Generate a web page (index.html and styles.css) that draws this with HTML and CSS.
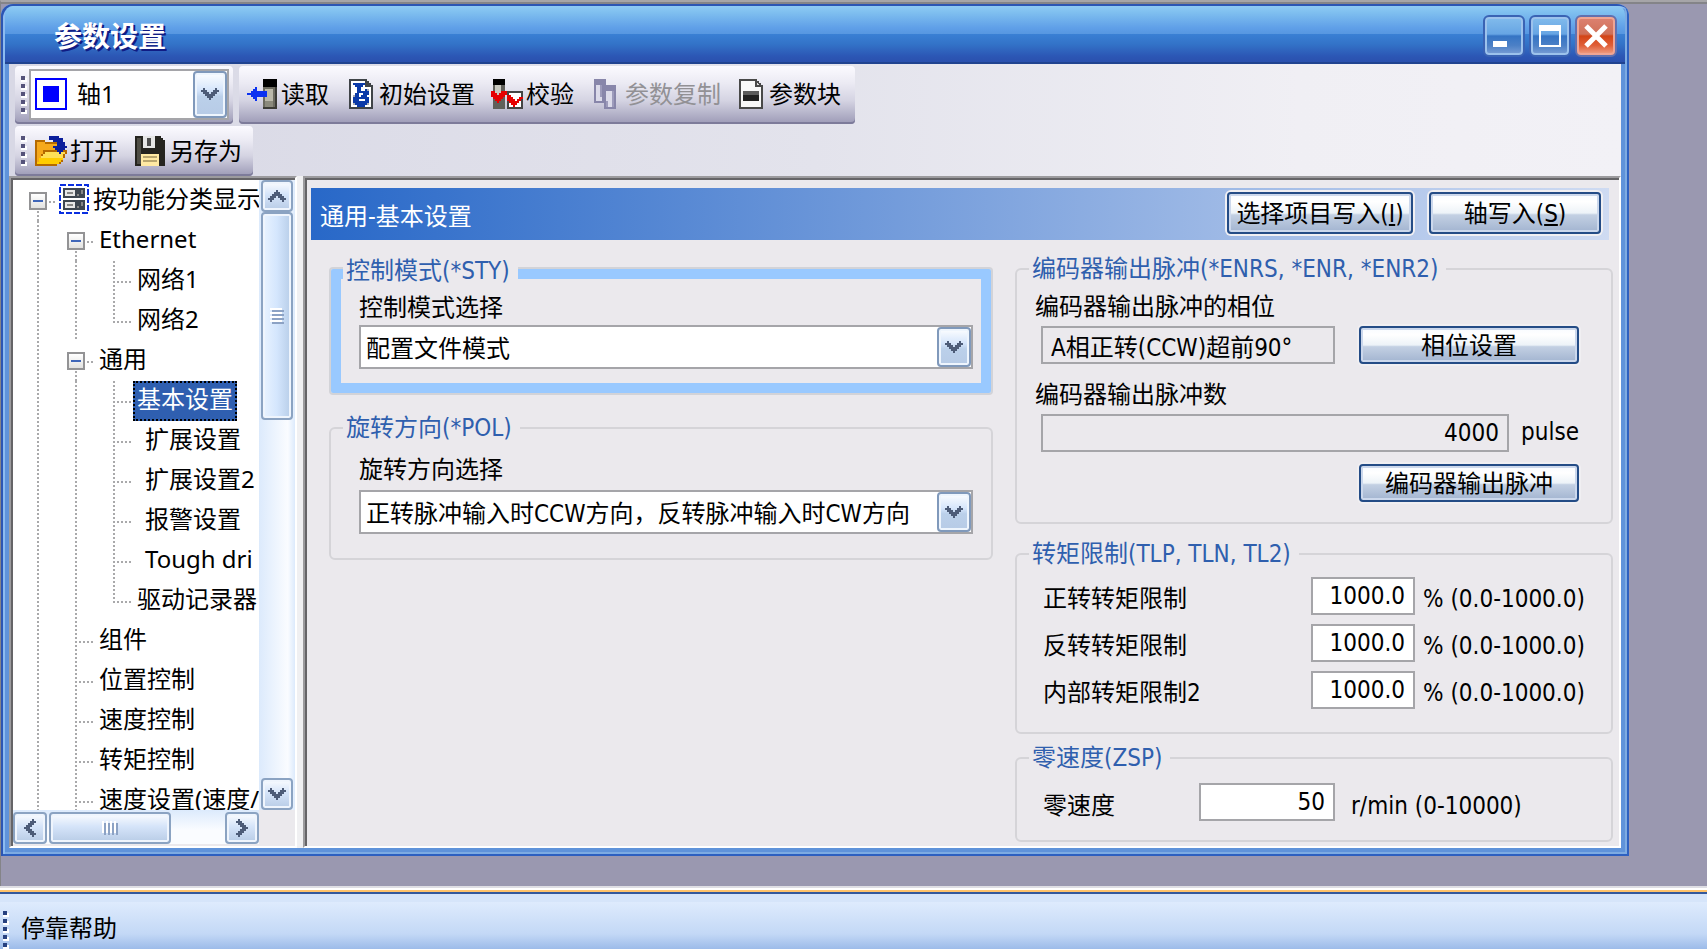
FILE: index.html
```html
<!DOCTYPE html>
<html lang="zh-CN">
<head>
<meta charset="utf-8">
<title>参数设置</title>
<link rel="stylesheet" href="styles.css">
</head>
<body>
<main class="workspace">
  <section class="window" aria-label="参数设置">
    <header class="titlebar">
      <h1 class="title">参数设置</h1>
      <div class="caption-buttons">
        <button class="caption" aria-label="最小化"><svg width="38" height="38" shape-rendering="crispEdges"><path fill="#fff" d="M8 24h14v6H8z"/></svg></button>
        <button class="caption" aria-label="最大化"><svg width="38" height="38" shape-rendering="crispEdges"><path fill="#fff" fill-rule="evenodd" d="M8 8h22v22H8zM10 14v14h18V14z"/></svg></button>
        <button class="caption close" aria-label="关闭"><svg width="38" height="38"><path stroke="#fff" stroke-width="5" d="M9 9L29 29M29 9L9 29"/></svg></button>
      </div>
    </header>
    <div class="client">
      <div class="toolbars">
        <div class="strip axis-strip">
          <span class="grip"></span>
          <div class="combo axis-combo">
            <svg class="axis-icon" width="32" height="32" shape-rendering="crispEdges"><rect x="1" y="1" width="30" height="30" fill="#fff" stroke="#00f" stroke-width="2"/><path fill="#00f" d="M8 8h16v16H8z"/></svg>
            <select aria-label="轴"><option>轴1</option></select>
            <span class="drop"><svg width="18" height="12" shape-rendering="crispEdges"><path fill="#4d5c78" d="M2 0h2v2h2v2h2v2h2V4h2V2h2V0h2v2h2v2h-2v2h-2v2h-2v2h-2v2H8v-2H6V8H4V6H2V4H0V2h2z"/></svg></span>
          </div>
        </div>
        <div class="strip action-strip">
          <button class="tool read"><svg width="30" height="30" shape-rendering="crispEdges"><path fill="#6c6b60" d="M16 8h14v22H16z"/><path fill="#000" d="M16 0h14v8H16z"/><path fill="#bbb9aa" d="M18 10h8v12h-8z"/><path fill="#8b8a7c" d="M18 22h8v6h-8z"/><path fill="#3c3c36" d="M28 8h2v22H16v-2h12z"/><path fill="#0b32f0" d="M8 8h2v4h10v6H10v4H8v-2H6v-2H4v-2H0v-2h4v-2h2v-2h2z"/></svg><span>读取</span></button>
          <button class="tool"><svg width="24" height="30" shape-rendering="crispEdges"><path fill="#404448" d="M0 0h18v2h2v2h2v2h2v24H0z"/><path fill="#fff" d="M2 2h14v6h6v20H2z"/><path fill="#a9adb5" d="M4 16h2v2H4zM4 20h2v2H4zM4 24h4v2H4zM16 10h4v2h-4zM16 26h4v-2h-4z"/><path fill="#0b3aa8" d="M4 4h12v2h-2v2h-2v4h4v-2h2v2h2v4h-2v2h2v6h-2v2h-2v2H8v-2H6v-2H4v-6h2v-4h2V8H6V6H4z"/><path fill="#fff" d="M10 14h4v2h-4zM10 16h2v2h-2zM10 20h6v2h-6z"/></svg><span>初始设置</span></button>
          <button class="tool verify"><svg width="32" height="30" shape-rendering="crispEdges"><path fill="#60605a" d="M2 6h12v24H2z"/><path fill="#000" d="M2 0h12v6H2z"/><path fill="#c9c9c0" d="M4 6h6v12H4z"/><path fill="#444" d="M16 12h16v18H16z"/><path fill="#fff" d="M18 14h12v14H18z"/><path fill="#e60000" d="M0 12h4v2h2v2h2v-2h2v-2h6v4h-2v2h-2v2h-2v2H8v2H6v-2H4v-2H2v-2H0zM16 16h4v2h2v2h2v2h2v-2h2v-2h4v2h-2v2h-2v2h-2v2h-2v2h-2v-2h-2v-2h-2v-2h-2z"/></svg><span>校验</span></button>
          <button class="tool copy" disabled><svg width="22" height="30" shape-rendering="crispEdges"><path fill="#8886aa" d="M0 0h12v24H0zM10 6h12v24H10z"/><path fill="#dcdbea" d="M2 6h6v16H2zM12 12h8v16h-8z"/><path fill="#9d9bbb" d="M6 6h2v12H6zM18 12h2v16h-2zM12 22h2v6h-2z"/></svg><span>参数复制</span></button>
          <button class="tool"><svg width="24" height="30" shape-rendering="crispEdges"><path fill="#494949" d="M0 0h18v2h2v2h2v2h2v24H0z"/><path fill="#f8f8f8" d="M2 2h14v6h6v20H2z"/><path fill="#ddd" d="M18 4v2h2z"/><path fill="#5d5d5d" d="M4 12h16v4H4z"/><path fill="#222" d="M4 16h16v6H4z"/></svg><span>参数块</span></button>
        </div>
        <div class="strip file-strip">
          <span class="grip"></span>
          <button class="tool"><svg width="32" height="30" shape-rendering="crispEdges"><path fill="#b56a00" d="M0 4h10v2h16v8h6v4h-2v4h-2v4h-2v2h-4v2H0z"/><path fill="#f6a91c" d="M2 6h8v2h14v6H8v4H6v4H4v4H2z"/><path fill="#ffe056" d="M10 16h20v2h-2v4H6v-2h2v-2h2z"/><path fill="#fc0" d="M6 22h22v2h-2v2h-2v2H2v-2h2v-4z"/><path fill="#0a1e9b" d="M14 0h10v2h4v4h2v4h2v2h-2v2h-2v2h-2v2h-2v-2h-2v-2h-2v-2h-2v-2h4V6h-4V4h-4z"/></svg><span>打开</span></button>
          <button class="tool save"><svg width="30" height="30" shape-rendering="crispEdges"><path fill="#25241f" d="M0 0h26v2h2v2h2v26H0z"/><path fill="#4e4d45" d="M2 2h4v26H2z"/><path fill="#e6e6e6" d="M8 0h12v12H8z"/><path fill="#4d4d4d" d="M12 2h4v8h-4z"/><path fill="#ffe9a3" d="M6 18h18v12H6z"/><path fill="#b9a66e" d="M8 20h14v2H8zM8 24h14v2H8z"/></svg><span>另存为</span></button>
        </div>
      </div>

      <div class="body">
        <nav class="tree-pane" aria-label="参数树">
          <div class="tree">
            <div class="row"><button class="exp" aria-label="折叠"></button><svg class="root-icon" width="30" height="30" shape-rendering="crispEdges"><rect x="1" y="1" width="28" height="28" fill="#fff" stroke="#0a2fe0" stroke-width="2" stroke-dasharray="6 2"/><path fill="#3e4650" d="M4 4h22v10H4zM4 16h22v10H4z"/><path fill="#e8e8e8" d="M6 6h10v6H6zM6 18h10v6H6z"/><path fill="#888" d="M8 8h6v2H8zM8 20h6v2H8zM18 10h2v2h-2zM22 6h2v4h-2zM18 22h2v2h-2zM22 18h2v4h-2z"/></svg><span class="label">按功能分类显示</span></div>
            <div class="row"><i class="v"></i><button class="exp" aria-label="折叠"></button><span class="label">Ethernet</span></div>
            <div class="row"><i class="v"></i><i class="v"></i><i class="v t"></i><span class="label">网络1</span></div>
            <div class="row"><i class="v"></i><i class="v"></i><i class="v t end"></i><span class="label">网络2</span></div>
            <div class="row"><i class="v"></i><button class="exp" aria-label="折叠"></button><span class="label">通用</span></div>
            <div class="row"><i class="v"></i><i class="v"></i><i class="v t"></i><span class="label selected">基本设置</span></div>
            <div class="row"><i class="v"></i><i class="v"></i><i class="v t"></i><span class="label inset">扩展设置</span></div>
            <div class="row"><i class="v"></i><i class="v"></i><i class="v t"></i><span class="label inset">扩展设置2</span></div>
            <div class="row"><i class="v"></i><i class="v"></i><i class="v t"></i><span class="label inset">报警设置</span></div>
            <div class="row"><i class="v"></i><i class="v"></i><i class="v t"></i><span class="label inset">Tough dri</span></div>
            <div class="row"><i class="v"></i><i class="v"></i><i class="v t end"></i><span class="label">驱动记录器</span></div>
            <div class="row"><i class="v"></i><i class="v t"></i><span class="label">组件</span></div>
            <div class="row"><i class="v"></i><i class="v t"></i><span class="label">位置控制</span></div>
            <div class="row"><i class="v"></i><i class="v t"></i><span class="label">速度控制</span></div>
            <div class="row"><i class="v"></i><i class="v t"></i><span class="label">转矩控制</span></div>
            <div class="row"><i class="v"></i><i class="v t"></i><span class="label">速度设置(速度/</span></div>
          </div>
          <div class="vbar">
            <button class="sb" aria-label="向上"><svg width="18" height="12" shape-rendering="crispEdges"><path fill="#4d5c78" d="M8 0h2v2h2v2h2v2h2v2h2v2h-2v2h-2v-2h-2V8h-2V6H8v2H6v2H4v2H2v-2H0V8h2V6h2V4h2V2h2z"/></svg></button>
            <div class="thumb"><svg width="14" height="16" shape-rendering="crispEdges"><path fill="#fff" d="M0 0h12v2H0zM0 4h12v2H0zM0 8h12v2H0zM0 12h12v2H0z"/><path fill="#8ca2c4" d="M2 2h12v2H2zM2 6h12v2H2zM2 10h12v2H2zM2 14h12v2H2z"/></svg></div>
            <button class="sb last" aria-label="向下"><svg width="18" height="12" shape-rendering="crispEdges"><path fill="#4d5c78" d="M2 0h2v2h2v2h2v2h2V4h2V2h2V0h2v2h2v2h-2v2h-2v2h-2v2h-2v2H8v-2H6V8H4V6H2V4H0V2h2z"/></svg></button>
          </div>
          <div class="hbar">
            <button class="sb" aria-label="向左"><svg width="12" height="18" shape-rendering="crispEdges"><path fill="#4d5c78" d="M8 0h2v2h2v2h-2v2H8v2H6v2h2v2h2v2h2v2h-2v2H8v-2H6v-2H4v-2H2v-2H0V8h2V6h2V4h2V2h2z"/></svg></button>
            <div class="thumb"><svg width="16" height="14" shape-rendering="crispEdges"><path fill="#fff" d="M0 0h2v12H0zM4 0h2v12H4zM8 0h2v12H8zM12 0h2v12h-2z"/><path fill="#8ca2c4" d="M2 2h2v12H2zM6 2h2v12H6zM10 2h2v12h-2zM14 2h2v12h-2z"/></svg></div>
            <button class="sb last" aria-label="向右"><svg width="12" height="18" shape-rendering="crispEdges"><path fill="#4d5c78" d="M4 0H2v2H0v2h2v2h2v2h2v2H4v2H2v2H0v2h2v2h2v-2h2v-2h2v-2h2v-2h2V8h-2V6H8V4H6V2H4z"/></svg></button>
          </div>
          <div class="corner"></div>
        </nav>

        <div class="panel">
          <div class="panel-head">
            <h2 class="panel-title">通用-基本设置</h2>
            <button class="btn head-btn wide">选择项目写入(<u>I</u>)</button>
            <button class="btn head-btn">轴写入(<u>S</u>)</button>
          </div>
          <form class="groups">
            <div class="col">
              <fieldset class="active">
                <legend>控制模式(*STY)</legend>
                <label class="lab" for="mode">控制模式选择</label>
                <div class="combo">
                  <select id="mode"><option>配置文件模式</option></select>
                  <span class="drop"><svg width="18" height="12" shape-rendering="crispEdges"><path fill="#4d5c78" d="M2 0h2v2h2v2h2v2h2V4h2V2h2V0h2v2h2v2h-2v2h-2v2h-2v2h-2v2H8v-2H6V8H4V6H2V4H0V2h2z"/></svg></span>
                </div>
              </fieldset>
              <fieldset class="rotation">
                <legend>旋转方向(*POL)</legend>
                <label class="lab" for="pol">旋转方向选择</label>
                <div class="combo">
                  <select id="pol"><option>正转脉冲输入时CCW方向，反转脉冲输入时CW方向</option></select>
                  <span class="drop"><svg width="18" height="12" shape-rendering="crispEdges"><path fill="#4d5c78" d="M2 0h2v2h2v2h2v2h2V4h2V2h2V0h2v2h2v2h-2v2h-2v2h-2v2h-2v2H8v-2H6V8H4V6H2V4H0V2h2z"/></svg></span>
                </div>
              </fieldset>
            </div>
            <div class="col">
              <fieldset class="encoder">
                <legend>编码器输出脉冲(*ENRS, *ENR, *ENR2)</legend>
                <label class="lab" for="phase">编码器输出脉冲的相位</label>
                <div class="line"><input class="phase" id="phase" readonly value="A相正转(CCW)超前90°"><button type="button" class="btn enc-btn">相位设置</button></div>
                <label class="lab second" for="pulse">编码器输出脉冲数</label>
                <div class="line pulse-line"><input class="num" id="pulse" readonly value="4000"><span class="unit">pulse</span></div>
                <div class="line end-line"><button type="button" class="btn enc-btn">编码器输出脉冲</button></div>
              </fieldset>
              <fieldset class="torque">
                <legend>转矩限制(TLP, TLN, TL2)</legend>
                <div class="line"><label for="tlp">正转转矩限制</label><input class="num" id="tlp" value="1000.0"><span class="unit">% (0.0-1000.0)</span></div>
                <div class="line"><label for="tln">反转转矩限制</label><input class="num" id="tln" value="1000.0"><span class="unit">% (0.0-1000.0)</span></div>
                <div class="line"><label for="tl2">内部转矩限制2</label><input class="num" id="tl2" value="1000.0"><span class="unit">% (0.0-1000.0)</span></div>
              </fieldset>
              <fieldset class="zero">
                <legend>零速度(ZSP)</legend>
                <div class="line"><label for="zsp">零速度</label><input class="num" id="zsp" value="50"><span class="unit">r/min (0-10000)</span></div>
              </fieldset>
            </div>
          </form>
        </div>
      </div>
    </div>
  </section>
</main>
<footer class="help"><span class="grip blue"></span><span>停靠帮助</span></footer>
</body>
</html>
```
FILE: styles.css
```css
* { box-sizing: border-box; }

body {
  margin: 0;
  min-height: 100vh;
  display: flex;
  flex-direction: column;
  background: #9a98b0;
  color: #000;
  font: 24px/32px "Noto Sans", "Noto Sans CJK SC", sans-serif;
}

button, input, select { font: inherit; color: inherit; margin: 0; }
button { padding: 0; border: 0; background: none; }
svg { display: block; flex: none; }

.workspace {
  flex: 1;
  display: flex;
  padding: 2px 78px 30px 0;
  border-top: 2px solid #a6a5a8;
  border-left: 1px solid #848488;
  background: linear-gradient(#848488 2px, #9a98b0 2px);
}

/* Window frame */
.window {
  flex: 1;
  min-width: 0;
  display: flex;
  flex-direction: column;
  padding: 2px 8px 8px;
  border-radius: 12px 12px 0 0;
  background: #5f93da;
  box-shadow: inset 2px 2px #2c56b4, inset -2px -2px #2d60c0, inset 4px 4px #8dbcf0, inset -4px -4px #7dabe2;
}
.titlebar {
  flex: none;
  height: 58px;
  margin: 0 -4px;
  padding: 0 0 0 49px;
  display: flex;
  align-items: center;
  justify-content: space-between;
  border-radius: 8px 8px 0 0;
  border-bottom: 2px solid #204390;
  background: linear-gradient(#8fcaf4 0, #80c0f0 6px, #5f9fe8 22px, #5797e0 28px, #3a80d4 28px, #3373c8 38px, #2c57b5 50px, #2a50ae 56px);
}
.title { margin: 0; padding-top: 4px; color: #fff; font-size: 28px; line-height: 36px; text-shadow: 2px 2px #101c84; }
.caption-buttons { display: flex; gap: 4px; padding: 4px 8px 0 0; }
.caption {
  width: 42px;
  height: 42px;
  border: 2px solid #3a63b4;
  border-radius: 6px;
  background: linear-gradient(#82bcec, #67a5e4 45%, #3574c4 50%, #4c80c6 75%, #7da0d6);
  box-shadow: inset 0 0 0 2px #9cc2ec;
}
.close {
  border-color: #6270ae;
  background: linear-gradient(#dd8272, #cf7058 45%, #d34416 50%, #e05f38 75%, #f0a58c);
  box-shadow: inset 0 0 0 2px #efa594;
}

.client {
  flex: 1;
  min-height: 0;
  display: flex;
  flex-direction: column;
  background: linear-gradient(90deg, #d8d8e5, #e3e3ec 50%, #f0eff4 80%, #f2f1f6);
}

/* Toolbars */
.toolbars { display: flex; flex-wrap: wrap; gap: 2px 6px; padding: 2px 700px 0 6px; height: 112px; align-content: flex-start; }
.strip {
  display: flex;
  align-items: center;
  border-radius: 4px;
  background: linear-gradient(#fbfaff, #ebeaf3 30%, #d4d3e2 60%, #9c9ab6);
  box-shadow: inset 0 -2px #7d7b9a;
}
.axis-strip { width: 218px; height: 58px; padding: 0 4px 0 6px; gap: 2px; }
.action-strip { height: 58px; padding: 0 14px 2px 8px; gap: 18px; }
.file-strip { width: 238px; height: 50px; padding: 0 0 0 6px; }
.file-strip .grip { margin-right: 8px; height: 30px; }
.grip {
  flex: none;
  width: 6px;
  height: 38px;
  background:
    repeating-linear-gradient(#55537a 0 4px, transparent 4px 8px) 0 0 / 4px 100% no-repeat,
    repeating-linear-gradient(transparent 0 2px, #fff 2px 6px, transparent 6px 8px);
}
.tool { display: flex; align-items: center; gap: 6px; white-space: nowrap; }
.tool:disabled { color: #929195; }
.read { gap: 4px; margin-right: 2px; }
.verify { gap: 3px; margin: 0 2px 0 -2px; }
.copy { gap: 9px; }
.file-strip .tool { gap: 3px; }
.file-strip .save { margin-left: 17px; gap: 5px; }

/* Drop-downs */
.combo { display: flex; height: 44px; border: 2px solid #a5a5a9; background: #fff; position: relative; }
.combo select {
  flex: 1;
  min-width: 0;
  appearance: none;
  border: 0;
  padding: 4px 36px 0 5px;
  background: transparent;
  outline: 0;
}
.drop {
  position: absolute;
  top: 0;
  right: 0;
  bottom: 0;
  width: 34px;
  display: grid;
  place-items: center;
  border: 2px solid #8099bb;
  border-radius: 4px;
  background: linear-gradient(#fdfeff, #d5e5fb 40%, #bbd0ea 55%, #b7cbe6);
  box-shadow: inset 0 0 0 2px #eef5fd;
  pointer-events: none;
}
.axis-combo { flex: 1; height: 51px; align-items: center; margin-bottom: 2px; }
.axis-combo select { padding: 0 36px 0 10px; height: 100%; }
.axis-icon { margin-left: 4px; }

/* Tree */
.body { flex: 1; min-height: 0; display: grid; grid-template-columns: 288px minmax(0, 1fr); gap: 6px; background: #f0f0f2; }
.tree-pane, .panel {
  border: 2px solid;
  border-color: #9c9b9e #fff #fff #9c9b9e;
  box-shadow: inset 2px 2px #656467;
}
.tree-pane {
  min-height: 0;
  display: grid;
  grid-template: minmax(0, 1fr) 34px / minmax(0, 1fr) 36px;
  padding: 2px 0 2px 2px;
  background: #ebe9ed;
}
.tree { overflow: hidden; background: #fff; padding: 1px 0 0 6px; height: 0; min-height: 100%; }
.row { display: flex; align-items: center; height: 40px; }
.v { flex: none; width: 38px; height: 40px; background: repeating-linear-gradient(#a9a9ab 0 2px, transparent 2px 4px) 18px 0 / 2px 100% no-repeat; }
.v.t {
  background:
    repeating-linear-gradient(#a9a9ab 0 2px, transparent 2px 4px) 18px 0 / 2px 100% no-repeat,
    repeating-linear-gradient(90deg, #a9a9ab 0 2px, transparent 2px 4px) 18px 20px / 18px 2px no-repeat;
}
.v.end {
  background:
    repeating-linear-gradient(#a9a9ab 0 2px, transparent 2px 4px) 18px 0 / 2px 20px no-repeat,
    repeating-linear-gradient(90deg, #a9a9ab 0 2px, transparent 2px 4px) 18px 20px / 18px 2px no-repeat;
}
.exp {
  flex: none;
  width: 38px;
  height: 40px;
  background:
    linear-gradient(#3f66b8, #3f66b8) 14px 19px / 10px 2px no-repeat,
    linear-gradient(#fff, #e2e2e0) 12px 13px / 14px 14px no-repeat,
    linear-gradient(#939395, #939395) 10px 11px / 18px 18px no-repeat,
    repeating-linear-gradient(90deg, #a9a9ab 0 2px, transparent 2px 4px) 30px 20px / 6px 2px no-repeat,
    repeating-linear-gradient(#a9a9ab 0 2px, transparent 2px 4px) 18px 30px / 2px 10px no-repeat;
}
.label { padding: 0 4px 4px; line-height: 36px; white-space: nowrap; }
.root-icon { margin: 0 0 4px 2px; }
.inset { padding-left: 12px; }
.selected { color: #fff; background: #2f5fb0; outline: 2px dotted #000; outline-offset: -2px; }

/* Scroll bars */
.vbar {
  padding: 0 2px;
  display: flex;
  flex-direction: column;
  background: linear-gradient(90deg, #dceafc, #fafcff 80%, #dceafc);
}
.hbar { display: flex; padding-top: 2px; background: linear-gradient(#dceafc, #fafcff 60%); }
.sb, .thumb {
  flex: none;
  width: 32px;
  height: 32px;
  display: grid;
  place-items: center;
  border: 2px solid #8ba3c2;
  border-radius: 4px;
  background: linear-gradient(#fafcff, #d5e4f9 45%, #b8cce6);
  box-shadow: inset 0 0 0 2px #eff5fd;
}
.last { margin-top: auto; }
.vbar .thumb { height: 208px; background: linear-gradient(90deg, #e9f3ff, #d4e6fd 50%, #b7cde8); }
.hbar .sb { width: 34px; }
.hbar .thumb { width: 122px; margin-left: 2px; }
.hbar .last { margin: 0 0 0 auto; }

/* Parameter panel */
.panel {
  min-width: 0;
  padding: 10px 6px 4px 6px;
  background: #ebe9ed;
  font-family: "DejaVu Sans Condensed", "Noto Sans CJK SC", sans-serif;
}
.panel-head {
  display: flex;
  align-items: center;
  gap: 12px;
  height: 52px;
  margin-right: 4px;
  padding: 0 8px 2px 9px;
  background: linear-gradient(90deg, #2868c8, #cfdbf2);
}
.panel-title { flex: 1; margin: 0; padding-top: 8px; font-weight: 400; font-size: 24px; line-height: 32px; color: #fff; }
.btn {
  flex: none;
  height: 38px;
  padding-top: 2px;
  border: 2px solid #244c86;
  border-radius: 4px;
  background: linear-gradient(#f8fbff, #fff 20%, #edf3f8 50%, #c3d0e3 55%, #a2b4d0);
  box-shadow: inset 0 0 0 2px #ccd8ec, 0 0 0 2px #f0eff2;
  line-height: 32px;
  white-space: nowrap;
}
.head-btn { width: 172px; height: 42px; }
.head-btn.wide { width: 186px; margin-right: 4px; }
.groups { display: grid; grid-template-columns: minmax(0, 664fr) minmax(0, 598fr); gap: 22px; padding: 13px 0 0 18px; }
.col { display: flex; flex-direction: column; }

fieldset { min-width: 0; margin: 0; padding: 0; border: 2px solid #d5d4d8; border-radius: 6px; }
legend { margin-left: -14px; padding: 0 8px 0 3px; line-height: 32px; color: #2f5fae; background: #ebe9ed; }
.lab { display: block; }
.line { display: flex; align-items: center; }

.active {
  margin: 4px 2px 0;
  padding: 0 8px 14px 18px;
  border: 10px solid #99c9ff;
  border-radius: 2px;
  box-shadow: 0 0 0 2px #d2d3d8;
}
.active legend { margin-left: -16px; padding-bottom: 6px; line-height: 28px; }
.active .lab { line-height: 34px; }
.rotation { margin-top: 19px; padding: 6px 18px 24px 28px; }
.rotation legend { margin-left: -16px; }
.rotation .lab { line-height: 40px; }

input { min-width: 0; height: 38px; padding: 0 8px; border: 2px solid #a5a5a9; border-radius: 0; outline: 0; background: #fff; }
input:read-only { background: #ebe9ed; }
.num { text-align: right; }
.unit { white-space: nowrap; }

.encoder { padding: 4px 32px 20px 18px; }
.encoder legend { margin-left: -6px; }
.encoder .line { padding-left: 6px; justify-content: space-between; }
.encoder .lab { line-height: 37px; }
.encoder .second { padding-top: 12px; line-height: 38px; }
.phase { width: 294px; }
.enc-btn { width: 220px; }
.pulse-line .num { flex: 1; }
.pulse-line .unit { width: 70px; padding: 0 0 2px 12px; }
.encoder .end-line { justify-content: flex-end; margin-top: 12px; }

.torque { margin-top: 14px; padding: 7px 10px 23px 26px; display: flex; flex-direction: column; gap: 9px; }
.torque label, .zero label { flex: 1; padding-top: 5px; }
.torque .num { width: 104px; }
.torque .unit { width: 186px; padding: 5px 0 0 8px; }

.zero { margin-top: 8px; padding: 8px 82px 18px 26px; }
.zero label { padding-top: 8px; }
.zero .num { width: 136px; }
.zero .unit { width: 194px; padding: 8px 0 0 16px; }

/* Docked help bar */
.help {
  flex: none;
  display: flex;
  align-items: center;
  gap: 12px;
  height: 63px;
  padding: 21px 0 0 3px;
  overflow: hidden;
  background: linear-gradient(#dedee4 2px, #fff 2px 4px, #ffc36c 4px 6px, #34599c 6px 8px, #d6e5fa 8px 16px, #deebfd 16px, #c3d8f6 48px, #9cbbe9 63px);
}
.blue {
  height: 38px;
  align-self: flex-end;
  background:
    repeating-linear-gradient(#27417f 0 4px, transparent 4px 8px) 0 0 / 4px 100% no-repeat,
    repeating-linear-gradient(transparent 0 2px, #fff 2px 6px, transparent 6px 8px);
}
```
